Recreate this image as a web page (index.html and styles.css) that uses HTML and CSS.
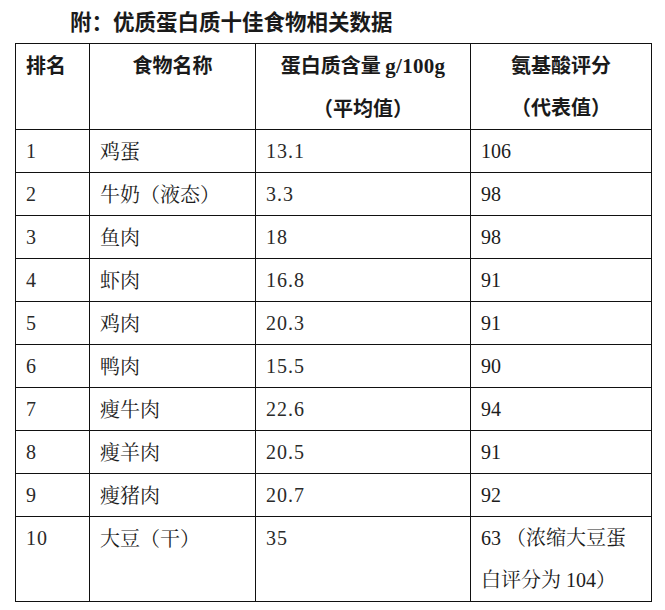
FILE: index.html
```html
<!DOCTYPE html>
<html lang="zh">
<head>
<meta charset="utf-8">
<title>优质蛋白质十佳食物相关数据</title>
<link rel="stylesheet" href="styles.css">
</head>
<body>
<h1 class="title">附：优质蛋白质十佳食物相关数据</h1>
<table class="data">
  <colgroup>
    <col class="c1"><col class="c2"><col class="c3"><col class="c4">
  </colgroup>
  <thead>
    <tr>
      <th class="left">排名</th>
      <th>食物名称</th>
      <th>蛋白质含量 <span class="unit">g/100g</span><br>（平均值）</th>
      <th>氨基酸评分<br>（代表值）</th>
    </tr>
  </thead>
  <tbody>
    <tr><td class="num">1</td><td>鸡蛋</td><td class="num">13.1</td><td class="score">106</td></tr>
    <tr><td class="num">2</td><td>牛奶（液态）</td><td class="num">3.3</td><td class="score">98</td></tr>
    <tr><td class="num">3</td><td>鱼肉</td><td class="num">18</td><td class="score">98</td></tr>
    <tr><td class="num">4</td><td>虾肉</td><td class="num">16.8</td><td class="score">91</td></tr>
    <tr><td class="num">5</td><td>鸡肉</td><td class="num">20.3</td><td class="score">91</td></tr>
    <tr><td class="num">6</td><td>鸭肉</td><td class="num">15.5</td><td class="score">90</td></tr>
    <tr><td class="num">7</td><td>瘦牛肉</td><td class="num">22.6</td><td class="score">94</td></tr>
    <tr><td class="num">8</td><td>瘦羊肉</td><td class="num">20.5</td><td class="score">91</td></tr>
    <tr><td class="num">9</td><td>瘦猪肉</td><td class="num">20.7</td><td class="score">92</td></tr>
    <tr><td class="num">10</td><td>大豆（干）</td><td class="num">35</td><td class="score">63 （浓缩大豆蛋<br>白评分为 104）</td></tr>
  </tbody>
</table>
</body>
</html>
```
FILE: styles.css
```css
html, body {
  margin: 0;
  padding: 0;
  background: #ffffff;
}
body {
  color: #1c1c1c;
  font-family: "Noto Serif CJK SC", "Source Han Serif SC", "AR PL UMing CN", "Liberation Serif", "Noto Sans CJK SC", serif;
}
.title {
  margin: 0;
  padding: 7px 0 0 70px;
  height: 36px;
  box-sizing: border-box;
  font-family: "Noto Sans CJK SC", sans-serif;
  font-weight: 700;
  font-size: 21.5px;
  line-height: 28px;
  color: #1a1a1a;
}
.data {
  margin: 7px 0 0 15px;
  border-collapse: collapse;
  table-layout: fixed;
  width: 636px;
}
.c1 { width: 74px; }
.c2 { width: 166px; }
.c3 { width: 215px; }
.c4 { width: 181px; }
.data th, .data td {
  border: 1.3px solid #111;
  padding: 0 10px;
  line-height: 42px;
  vertical-align: top;
  font-size: 20px;
  text-align: left;
}
.data th {
  font-family: "Noto Sans CJK SC", sans-serif;
  font-weight: 700;
  text-align: center;
  color: #1a1a1a;
}
.data th.left { text-align: left; }
.unit {
  font-family: "Liberation Serif", serif;
  font-weight: 700;
  font-size: 21px;
  letter-spacing: 0.3px;
}
.num {
  font-family: "Liberation Serif", serif;
  font-size: 21px;
  letter-spacing: 1px;
  color: #2a2a2a;
}
.score {
  font-family: "Liberation Serif", "Noto Serif CJK SC", "Noto Sans CJK SC", serif;
}
```
